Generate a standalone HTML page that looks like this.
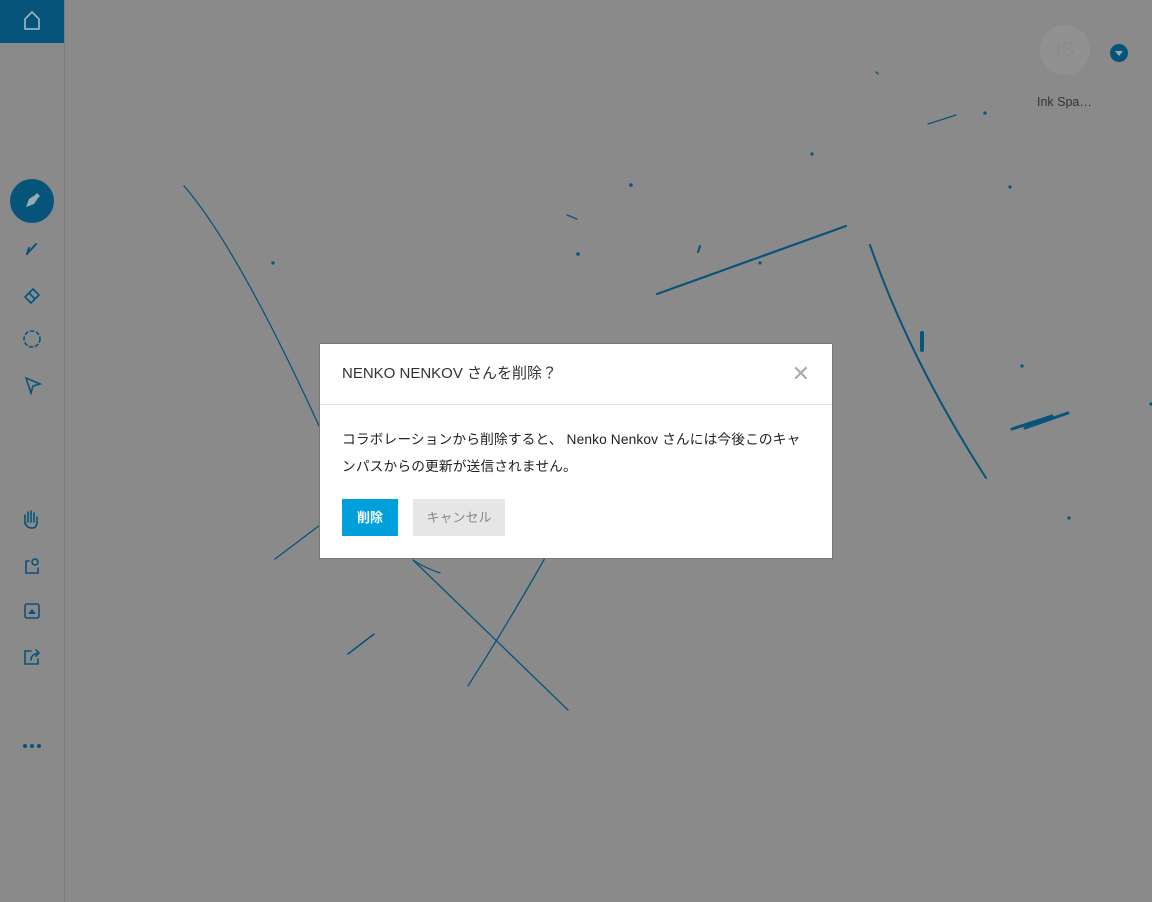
<!DOCTYPE html>
<html><head><meta charset="utf-8"><style>
body{margin:0;width:1152px;height:902px;background:#8a8a8a;position:relative;overflow:hidden;font-family:"Liberation Sans","Noto Sans CJK JP",sans-serif}
.side{position:absolute;left:0;top:0;width:64px;height:902px;border-right:1px solid #7e7e7e}
.home{position:absolute;left:0;top:0;width:64px;height:43px;background:#07547a}
svg{position:absolute;left:0;top:0}
.dlg{position:absolute;left:320px;top:344px;width:512px;height:214px;background:#fff;box-shadow:0 0 0 1px #777}
.hd{height:60px;border-bottom:1px solid #e2e2e2;font-size:15px;color:#333;line-height:60px;padding-left:22px}
.x{position:absolute;right:22px;top:20px;font-size:22px;color:#aaa;line-height:20px}
.bd{padding:21px 22px 0;font-size:13.7px;color:#222;line-height:27px;letter-spacing:0.15px}
.b1{position:absolute;left:22px;top:155px;width:56px;height:37px;background:#00a0dc;color:#fff;font-size:13px;font-weight:bold;text-align:center;line-height:37px}
.b2{position:absolute;left:93px;top:155px;width:92px;height:37px;background:#e6e6e6;color:#888;font-size:13px;text-align:center;line-height:37px}
.av{position:absolute;left:1040px;top:25px;width:50px;height:50px;border-radius:50%;background:#919191;color:#8a8a8a;font-size:20px;text-align:center;line-height:50px}
.nm{position:absolute;left:1037px;top:95px;font-size:12.5px;color:#333}
</style></head><body>
<div class="side"></div><div class="home"></div>
<svg width="1152" height="902" fill="none" stroke="#07547a" stroke-linecap="round">
<path d="M25 19 L32 12 L39 19 M25 19 V29 H39 V19" stroke="#b0c0c8" stroke-width="1.5"/>
<circle cx="32" cy="201" r="22" fill="#07547a" stroke="none"/>
<path d="M26 207 L29 199 L35 195 L38 198 L34 204 Z M35 195 L37 193 L40 196 L38 198" fill="#9aaab2" stroke="none"/>
<path d="M27 254 L29 248 M27 254 L36 244" stroke-width="2"/>
<path d="M25 297 L33 289 L39 295 L31 303 Z M29 293 L35 299" stroke-width="1.6"/>
<circle cx="32" cy="339" r="8" stroke-width="1.6" stroke-dasharray="3 3"/>
<path d="M26 378 L40 384 L33 386 L31 393 Z" stroke-width="1.6"/>
<path d="M25 524 V515 M28 522 V512 M31 522 V511 M34 522 V513 M37 524 V517 M25 522 Q26 528 32 528 Q37 528 37 522" stroke-width="1.6"/>
<path d="M29 561 H26 V573 H38 V568" stroke-width="1.6"/><circle cx="35" cy="562" r="3" stroke-width="1.6"/>
<rect x="25" y="604" width="14" height="14" rx="2" stroke-width="1.6"/><path d="M28 614 L32 609 L36 614 Z" fill="#07547a" stroke="none"/>
<path d="M31 651 H25 V664 H38 V659 M31 660 Q31 654 39 653 M36 650 L39 653 L36 656" stroke-width="1.6"/>
<g fill="#07547a" stroke="none"><circle cx="25" cy="746" r="2"/><circle cx="32" cy="746" r="2"/><circle cx="39" cy="746" r="2"/></g>
<g stroke-width="1.3">
<path d="M184 186 Q240 250 330 450"/>
<path d="M275 559 L320 525"/>
<path d="M413 560 L568 710"/><path d="M413 560 Q425 568 440 573"/>
<path d="M545 558 Q510 620 468 686"/><path d="M348 654 L374 634" stroke-width="1.6"/>
<path d="M567 215 L577 219"/><path d="M698 252 L700 246" stroke-width="2"/>
<path d="M928 124 L956 115"/>
<path d="M657 294 L846 226" stroke-width="2.2"/>
<path d="M870 245 Q910 360 986 478" stroke-width="2"/>
<path d="M1012 429 L1052 416 M1025 428 L1068 413" stroke-width="3"/>
<path d="M922 333 V350" stroke-width="4"/>
<path d="M876 72 L878 74"/>
</g>
<g fill="#07547a" stroke="none"><circle cx="273" cy="263" r="1.6"/><circle cx="578" cy="254" r="1.8"/><circle cx="631" cy="185" r="1.8"/><circle cx="760" cy="263" r="1.6"/><circle cx="812" cy="154" r="1.6"/><circle cx="985" cy="113" r="1.6"/><circle cx="1010" cy="187" r="1.6"/><circle cx="1022" cy="366" r="1.6"/><circle cx="1069" cy="518" r="1.6"/><circle cx="1151" cy="404" r="1.6"/>
<circle cx="1119" cy="53" r="9"/><path d="M1115 51 H1123 L1119 56 Z" fill="#9aaab2"/></g>
</svg>
<div class="av">IS</div><div class="nm">Ink Spa…</div>
<div class="dlg">
<div class="hd">NENKO NENKOV さんを削除？</div><div class="x">✕</div>
<div class="bd">コラボレーションから削除すると、 Nenko Nenkov さんには今後このキャンパスからの更新が送信されません。</div>
<div class="b1">削除</div><div class="b2">キャンセル</div>
</div>
</body></html>
